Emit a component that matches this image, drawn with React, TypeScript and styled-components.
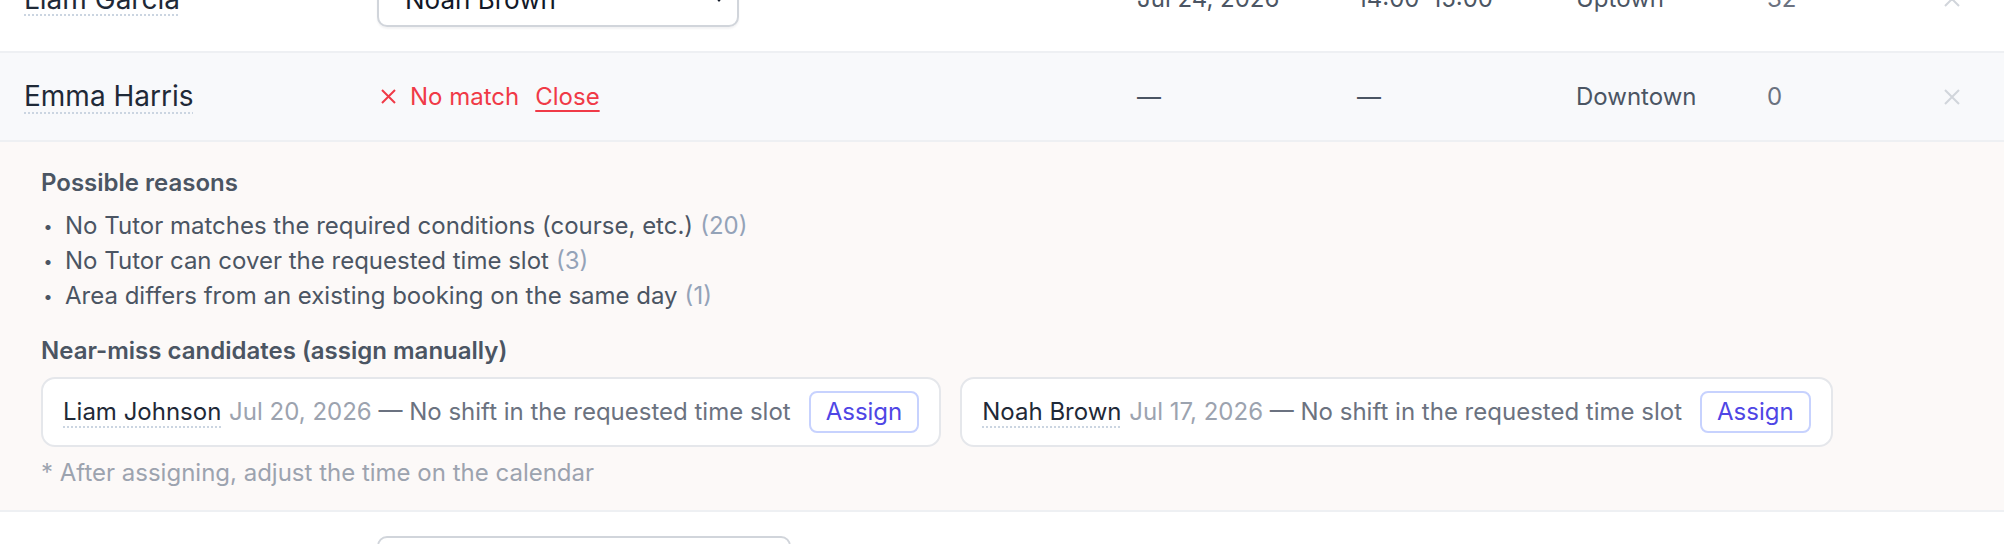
import { FC } from 'react';
import styled, { createGlobalStyle } from 'styled-components';

const GlobalStyle = createGlobalStyle`
  html, body {
    margin: 0;
    padding: 0;
    background: #ffffff;
    overflow: hidden;
  }
  body {
    font-family: Inter, "Noto Sans", "Liberation Sans", sans-serif;
    color: #4b5563;
    -webkit-font-smoothing: antialiased;
  }
`;

const S = {
  table: styled.div`
    width: 2004px;
    margin-top: -53px;
  `,
  row: styled.div<{ $muted?: boolean }>`
    display: grid;
    grid-template-columns: 353px 760px 220px 219px 191px 1fr auto;
    align-items: center;
    padding: 24px 44px 24px 24px;
    background: ${({ $muted }) => ($muted ? '#f8f9fb' : '#ffffff')};
    border-bottom: 2px solid #eef0f3;
  `,
  name: styled.span`
    justify-self: start;
    font-size: 28px;
    line-height: 39px;
    color: #1f2937;
    text-decoration: underline dotted #cbd5e1;
    text-decoration-thickness: 2px;
    text-underline-offset: 6px;
  `,
  cell: styled.span<{ $soft?: boolean }>`
    font-size: 24px;
    line-height: 36px;
    color: ${({ $soft }) => ($soft ? '#6b7280' : '#4b5563')};
  `,
  remove: styled.span`
    display: flex;
    color: #d1d5db;
  `,
  select: styled.div<{ $width: number }>`
    box-sizing: border-box;
    width: ${({ $width }) => $width}px;
    height: 56px;
    display: flex;
    align-items: center;
    justify-content: space-between;
    padding: 0 12px 0 26px;
    border: 2px solid #d1d5db;
    border-radius: 10px;
    box-shadow: 0 2px 2px rgba(15, 23, 42, 0.05);
    font-size: 26px;
    color: #111827;
    background: #ffffff;
  `,
  status: styled.div`
    display: flex;
    align-items: center;
    padding-left: 4px;
    font-size: 24px;
    line-height: 36px;
    color: #f03a47;
  `,
  noMatch: styled.span`
    margin-left: 14px;
  `,
  close: styled.a`
    margin-left: 16px;
    color: #f03a47;
    text-decoration: underline;
    text-decoration-thickness: 2px;
    text-underline-offset: 5px;
    cursor: pointer;
  `,
  panel: styled.div`
    padding: 24px 41px 21px;
    background: #fcf9f8;
    border-bottom: 2px solid #eef0f3;
  `,
  heading: styled.div`
    font-size: 24px;
    line-height: 33px;
    font-weight: 600;
    color: #4b5563;
  `,
  reasons: styled.ul`
    list-style: none;
    margin: 9px 0 21px;
    padding: 0;
  `,
  reason: styled.li`
    display: flex;
    font-size: 24px;
    line-height: 35px;
    color: #4b5563;
  `,
  bullet: styled.span`
    width: 24px;
    flex: none;
    font-family: "Noto Sans CJK JP", sans-serif;
    margin-left: -5px;
    margin-right: 5px;
    text-align: center;
  `,
  count: styled.span`
    margin-left: 7px;
    color: #94a3b8;
  `,
  cards: styled.div`
    display: flex;
    flex-wrap: wrap;
    gap: 19px;
    margin-top: 10px;
  `,
  card: styled.div`
    display: flex;
    align-items: center;
    gap: 18px;
    padding: 12px 20px;
    background: #ffffff;
    border: 2px solid #e5e7eb;
    border-radius: 14px;
  `,
  info: styled.span`
    font-size: 24px;
    line-height: 30px;
    color: #6b7280;
  `,
  candidate: styled.span`
    color: #1f2937;
    margin-right: 1px;
    text-decoration: underline dotted #cbd5e1;
    text-decoration-thickness: 2px;
    text-underline-offset: 6px;
  `,
  date: styled.span`
    color: #9ca3af;
  `,
  assign: styled.button`
    font-family: inherit;
    font-size: 24px;
    line-height: 30px;
    padding: 4px 15px;
    color: #4f46e5;
    background: #ffffff;
    border: 2px solid #c7d2fe;
    border-radius: 8px;
    cursor: pointer;
  `,
  note: styled.div`
    margin-top: 9px;
    font-size: 24px;
    line-height: 33px;
    color: #9ca3af;
  `,
};

const Cross: FC<{ size: number; stroke: number }> = ({ size, stroke }) => (
  <svg width={size} height={size} viewBox={`0 0 ${size} ${size}`} fill="none">
    <path
      d={`M1 1L${size - 1} ${size - 1}M${size - 1} 1L1 ${size - 1}`}
      stroke="currentColor"
      strokeWidth={stroke}
    />
  </svg>
);

const Caret: FC = () => (
  <svg width="12" height="8" viewBox="0 0 12 8">
    <path d="M1 1h10L6 7z" fill="#111827" />
  </svg>
);

type Candidate = { name: string; date: string; reason: string };

const reasons = [
  { text: 'No Tutor matches the required conditions (course, etc.)', n: 20 },
  { text: 'No Tutor can cover the requested time slot', n: 3 },
  { text: 'Area differs from an existing booking on the same day', n: 1 },
];

const candidates: Candidate[] = [
  { name: 'Liam Johnson', date: 'Jul 20, 2026', reason: 'No shift in the requested time slot' },
  { name: 'Noah Brown', date: 'Jul 17, 2026', reason: 'No shift in the requested time slot' },
];

const BookingRow: FC<{
  student: string;
  tutor: string;
  width: number;
  date: string;
  time: string;
  area: string;
  count: number;
}> = ({ student, tutor, width, date, time, area, count }) => (
  <S.row>
    <S.name>{student}</S.name>
    <S.select $width={width}>
      <span>{tutor}</span>
      <Caret />
    </S.select>
    <S.cell>{date}</S.cell>
    <S.cell>{time}</S.cell>
    <S.cell>{area}</S.cell>
    <S.cell $soft>{count}</S.cell>
    <S.remove>
      <Cross size={16} stroke={2} />
    </S.remove>
  </S.row>
);

const App: FC = () => (
  <>
    <GlobalStyle />
    <S.table>
      <BookingRow
        student="Liam Garcia"
        tutor="Noah Brown"
        width={362}
        date="Jul 24, 2026"
        time="14:00–15:00"
        area="Uptown"
        count={32}
      />

      <S.row $muted>
        <S.name>Emma Harris</S.name>
        <S.status>
          <Cross size={15} stroke={2} />
          <S.noMatch>No match</S.noMatch>
          <S.close>Close</S.close>
        </S.status>
        <S.cell>—</S.cell>
        <S.cell>—</S.cell>
        <S.cell>Downtown</S.cell>
        <S.cell $soft>0</S.cell>
        <S.remove>
          <Cross size={16} stroke={2} />
        </S.remove>
      </S.row>

      <S.panel>
        <S.heading>Possible reasons</S.heading>
        <S.reasons>
          {reasons.map(r => (
            <S.reason key={r.text}>
              <S.bullet>・</S.bullet>
              <span>
                {r.text}
                <S.count>({r.n})</S.count>
              </span>
            </S.reason>
          ))}
        </S.reasons>
        <S.heading>Near-miss candidates (assign manually)</S.heading>
        <S.cards>
          {candidates.map(c => (
            <S.card key={c.name}>
              <S.info>
                <S.candidate>{c.name}</S.candidate>{' '}
                <S.date>{c.date}</S.date> — {c.reason}
              </S.info>
              <S.assign>Assign</S.assign>
            </S.card>
          ))}
        </S.cards>
        <S.note>* After assigning, adjust the time on the calendar</S.note>
      </S.panel>

      <BookingRow
        student="Olivia Smith"
        tutor="Select a tutor"
        width={414}
        date="Jul 28, 2026"
        time="10:00–11:00"
        area="Midtown"
        count={12}
      />
    </S.table>
  </>
);

export default App;
